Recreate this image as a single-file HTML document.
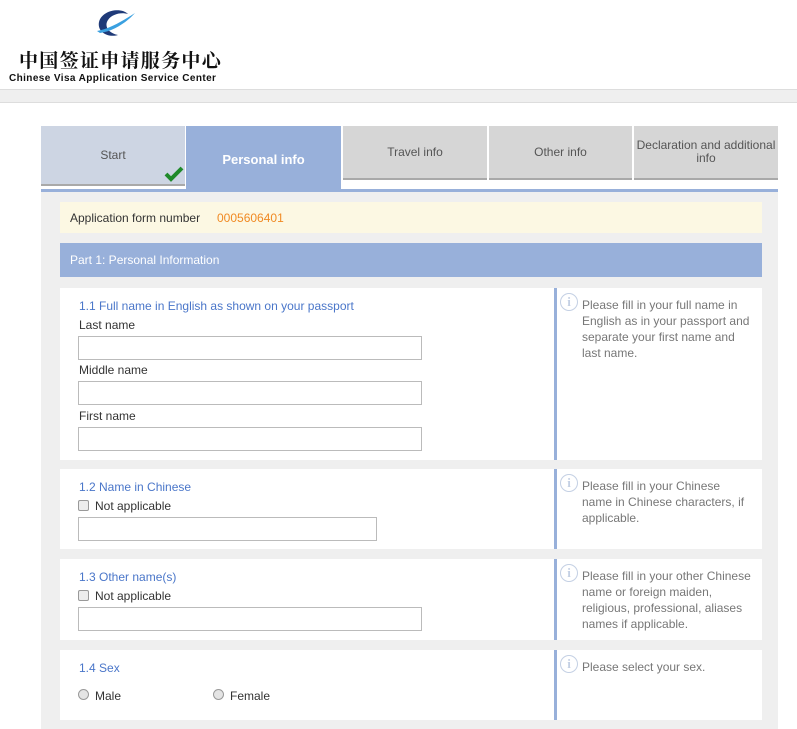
<!DOCTYPE html>
<html><head><meta charset="utf-8"><style>
*{box-sizing:border-box;margin:0;padding:0}
body{width:797px;height:716px;overflow:hidden;background:#fff;font-family:"Liberation Sans",Arial,sans-serif;font-size:12px;color:#333;position:relative}
.a{position:absolute}
.bar{left:0;top:89px;width:797px;height:14px;background:#efefef;border-top:1px solid #ddd;border-bottom:1px solid #ddd}
.tab{top:126px;height:54px;background:#d6d6d6;border-bottom:2px solid #a9a9a9;color:#555;text-align:center;font-size:12px;display:flex;align-items:center;justify-content:center;line-height:13px}
.wrap{left:41px;top:189px;width:737px;height:540px;background:#efefef;border-top:3px solid #98b0da}
.sec{left:60px;width:702px;background:#fff}
.div{left:554px;width:3px;background:#98b0da}
.lbl{color:#4a76c9;font-size:12px}
.t{font-size:12px;color:#333}
.in{height:24px;border:1px solid #bbb;background:#fff}
.help{left:582px;white-space:nowrap;color:#777;font-size:12px;line-height:16px}
.ic{left:560px;width:18px;height:18px;border:1.5px solid #c4d0e4;border-radius:50%;color:#c4d0e4;font:bold 13px "Liberation Serif",serif;text-align:center;line-height:15px}
.cb{width:11px;height:11px;border:1px solid #999;background:#ececec;border-radius:2px}
.rd{width:11px;height:11px;border:1px solid #999;background:#e4e4e4;border-radius:50%}
</style></head><body>
<svg class="a" style="left:96px;top:8px" width="40" height="32" viewBox="0 0 40 32">
<path d="M32 6 C25 -1 6 2 3 14 C1 24 12 30 22 27 C12 25 8 18 12 12 C16 6 25 4 32 6Z" fill="#1f3a78"/>
<path d="M1 23 C14 21 28 12 39 5 C31 14 18 23 4 25Z" fill="#3aa0e0"/>
</svg>
<div class="a" style="left:19px;top:46px;font:bold 19px 'Noto Serif CJK SC',serif;letter-spacing:1.3px;color:#111">中国签证申请服务中心</div>
<div class="a" style="left:9px;top:73px;font:bold 10px 'Liberation Sans',sans-serif;color:#111;letter-spacing:0.4px">Chinese Visa Application Service Center</div>
<div class="a bar"></div>

<div class="a tab" style="left:41px;width:144px;background:#cdd5e3;height:60px">Start</div>
<svg class="a" style="left:164px;top:166px" width="20" height="16" viewBox="0 0 20 16"><path d="M2 8 L7 13 L18 2" stroke="#1f8a2a" stroke-width="4" fill="none"/></svg>
<div class="a tab" style="left:186px;width:155px;height:64px;background:#98b0da;border:none;color:#fff;font-weight:bold;font-size:13px;padding-top:2px">Personal info</div>
<div class="a tab" style="left:343px;width:144px">Travel info</div>
<div class="a tab" style="left:489px;width:143px">Other info</div>
<div class="a tab" style="left:634px;width:144px">Declaration and additional<br>info</div>

<div class="a wrap"></div>
<div class="a" style="left:60px;top:202px;width:702px;height:31px;background:#fcf8e3"></div>
<div class="a t" style="left:70px;top:211px">Application form number</div>
<div class="a" style="left:217px;top:211px;color:#f08a24">0005606401</div>
<div class="a" style="left:60px;top:243px;width:702px;height:34px;background:#98b0da;color:#fff;font-size:12px;padding:10px 10px">Part 1: Personal Information</div>

<div class="a sec" style="top:288px;height:172px"></div>
<div class="a div" style="top:288px;height:172px"></div>
<div class="a lbl" style="left:79px;top:299px">1.1 Full name in English as shown on your passport</div>
<div class="a t" style="left:79px;top:318px">Last name</div>
<div class="a in" style="left:78px;top:336px;width:344px"></div>
<div class="a t" style="left:79px;top:363px">Middle name</div>
<div class="a in" style="left:78px;top:381px;width:344px"></div>
<div class="a t" style="left:79px;top:409px">First name</div>
<div class="a in" style="left:78px;top:427px;width:344px"></div>
<div class="a ic" style="top:293px">i</div>
<div class="a help" style="top:297px">Please fill in your full name in<br>English as in your passport and<br>separate your first name and<br>last name.</div>

<div class="a sec" style="top:469px;height:80px"></div>
<div class="a div" style="top:469px;height:80px"></div>
<div class="a lbl" style="left:79px;top:480px">1.2 Name in Chinese</div>
<div class="a cb" style="left:78px;top:500px"></div>
<div class="a t" style="left:95px;top:499px">Not applicable</div>
<div class="a in" style="left:78px;top:517px;width:299px"></div>
<div class="a ic" style="top:474px">i</div>
<div class="a help" style="top:478px">Please fill in your Chinese<br>name in Chinese characters, if<br>applicable.</div>

<div class="a sec" style="top:559px;height:81px"></div>
<div class="a div" style="top:559px;height:81px"></div>
<div class="a lbl" style="left:79px;top:570px">1.3 Other name(s)</div>
<div class="a cb" style="left:78px;top:590px"></div>
<div class="a t" style="left:95px;top:589px">Not applicable</div>
<div class="a in" style="left:78px;top:607px;width:344px"></div>
<div class="a ic" style="top:564px">i</div>
<div class="a help" style="top:568px">Please fill in your other Chinese<br>name or foreign maiden,<br>religious, professional, aliases<br>names if applicable.</div>

<div class="a sec" style="top:650px;height:70px"></div>
<div class="a div" style="top:650px;height:70px"></div>
<div class="a lbl" style="left:79px;top:661px">1.4 Sex</div>
<div class="a rd" style="left:78px;top:689px"></div>
<div class="a t" style="left:95px;top:689px">Male</div>
<div class="a rd" style="left:213px;top:689px"></div>
<div class="a t" style="left:230px;top:689px">Female</div>
<div class="a ic" style="top:655px">i</div>
<div class="a help" style="top:659px">Please select your sex.</div>
</body></html>
